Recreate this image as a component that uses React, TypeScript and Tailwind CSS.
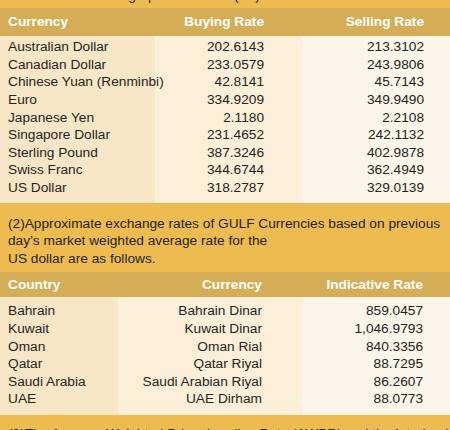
const rates = [
  ["Australian Dollar", "202.6143", "213.3102"],
  ["Canadian Dollar", "233.0579", "243.9806"],
  ["Chinese Yuan (Renminbi)", "42.8141", "45.7143"],
  ["Euro", "334.9209", "349.9490"],
  ["Japanese Yen", "2.1180", "2.2108"],
  ["Singapore Dollar", "231.4652", "242.1132"],
  ["Sterling Pound", "387.3246", "402.9878"],
  ["Swiss Franc", "344.6744", "362.4949"],
  ["US Dollar", "318.2787", "329.0139"],
];

const gulf = [
  ["Bahrain", "Bahrain Dinar", "859.0457"],
  ["Kuwait", "Kuwait Dinar", "1,046.9793"],
  ["Oman", "Oman Rial", "840.3356"],
  ["Qatar", "Qatar Riyal", "88.7295"],
  ["Saudi Arabia", "Saudi Arabian Riyal", "86.2607"],
  ["UAE", "UAE Dirham", "88.0773"],
];

export default function App() {
  return (
    <div
      className="w-[450px] h-[430px] overflow-hidden whitespace-nowrap bg-[#edbb4f] text-[#262421] text-[13.7px] leading-[17.6px]"
      style={{ fontFamily: '"Liberation Sans", Arial, sans-serif' }}
    >
      {/* (1) intro, mostly scrolled off the top */}
      <p className="-mt-[31px] px-2 pb-[4px]">
        (1)Exchange rates of major currencies based on previous day's
        <br />
        Middle rates for telegraphic transfers (TT)
      </p>

      {/* Table 1 */}
      <div className="grid grid-cols-[155px_147px_148px] h-[28px] items-center bg-[#d5ad56] text-white font-bold">
        <div className="pl-2">Currency</div>
        <div className="text-right pr-[38px]">Buying Rate</div>
        <div className="text-right pr-[26px]">Selling Rate</div>
      </div>
      <div className="grid grid-cols-[155px_147px_148px]">
        <div className="relative z-10 bg-[#f8e7c6] pl-2 pt-[2px] pb-[6px]">
          {rates.map((r) => (
            <div key={r[0]}>{r[0]}</div>
          ))}
        </div>
        <div className="bg-[#fbefda] text-right pr-[38px] pt-[2px] pb-[6px]">
          {rates.map((r) => (
            <div key={r[0]}>{r[1]}</div>
          ))}
        </div>
        <div className="bg-[#fcf5e9] text-right pr-[26px] pt-[2px] pb-[6px]">
          {rates.map((r) => (
            <div key={r[0]}>{r[2]}</div>
          ))}
        </div>
      </div>

      {/* (2) gulf note */}
      <p className="px-2 pt-[12px] pb-[5px]">
        (2)Approximate exchange rates of GULF Currencies based on previous
        <br />
        day’s market weighted average rate for the
        <br />
        US dollar are as follows.
      </p>

      {/* Table 2 */}
      <div className="grid grid-cols-[118px_184px_148px] h-[25px] items-center bg-[#d5ad56] text-white font-bold">
        <div className="pl-2">Country</div>
        <div className="text-right pr-[40px]">Currency</div>
        <div className="text-right pr-[27px]">Indicative Rate</div>
      </div>
      <div className="grid grid-cols-[118px_184px_148px]">
        <div className="bg-[#f8e7c6] pl-2 pt-[5px] pb-[7px]">
          {gulf.map((r) => (
            <div key={r[0]}>{r[0]}</div>
          ))}
        </div>
        <div className="bg-[#fbefda] text-right pr-[40px] pt-[5px] pb-[7px]">
          {gulf.map((r) => (
            <div key={r[0]}>{r[1]}</div>
          ))}
        </div>
        <div className="bg-[#fcf5e9] text-right pr-[27px] pt-[5px] pb-[7px]">
          {gulf.map((r) => (
            <div key={r[0]}>{r[2]}</div>
          ))}
        </div>
      </div>

      {/* (3) next note, cut off at the bottom */}
      <p className="px-2 pt-[10px]">
        (3)The Average Weighted Prime Lending Rate (AWPR) and the Interbank
      </p>
    </div>
  );
}
